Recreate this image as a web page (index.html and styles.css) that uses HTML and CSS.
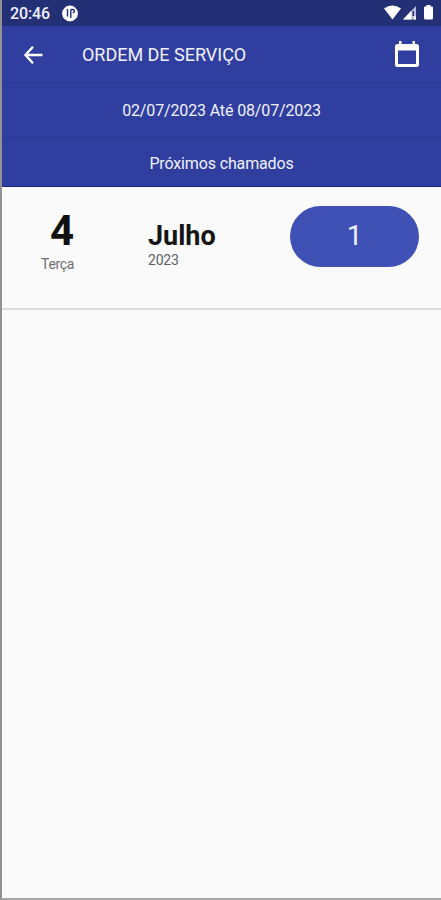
FILE: index.html
```html
<!DOCTYPE html>
<html lang="pt-BR">
<head>
<meta charset="utf-8">
<title>Ordem de Serviço</title>
<link rel="stylesheet" href="styles.css">
</head>
<body>
<div class="screen">
  <div class="status">
    <span class="clock">20:46</span>
    <svg class="notice" width="16" height="17" viewBox="0 0 16 17"><circle cx="8" cy="8.500" r="7.900" fill="#fff"/><path d="M5.500 4v7.500M8.800 13V4.500M8.800 4.500h2a1.600 1.600 0 0 1 0 3.200" fill="none" stroke="#243075" stroke-width="1.400"/></svg>
    <svg class="signals" width="50" height="16" viewBox="0 0 50 16">
      <path d="M0 3.500Q8.500-2.500 17 3.500L8.500 14.500z" fill="#fff"/>
      <path d="M19 14.500L32 1v13.500z" fill="#b5bbd9"/><path d="M19 14.500L27.500 5.600v8.900zM30 11.500h2v3h-2z" fill="#fff"/><path d="M28.500 6h1.500v5h-1.500z" fill="#243075"/>
      <path d="M42.500 0h4v1.500h1.500q1 0 1 1V13q0 1.500-1.500 1.500h-6Q40 14.500 40 13V2.500q0-1 1-1h1.500z" fill="#fff"/>
    </svg>
  </div>
  <header class="appbar">
    <svg class="back" width="20" height="20" viewBox="0 0 20 20"><path d="M19.500 10H3M10 1.700L2.500 10l7.500 8.300" fill="none" stroke="#fff" stroke-width="2.400"/></svg>
    <h1 class="title">ORDEM DE SERVIÇO</h1>
    <svg class="calendar" width="24" height="27" viewBox="0 0 24 27"><path fill="#fff" fill-rule="evenodd" d="M4 0h2.500v3h11V0H20v3h1.500Q24 3 24 5.500v18Q24 26 21.500 26h-19Q0 26 0 23.500v-18Q0 3 2.500 3H4zM3 9.500V23h18V9.500z"/></svg>
  </header>
  <div class="band range">02/07/2023 Até 08/07/2023</div>
  <div class="band upcoming">Próximos chamados</div>
  <main class="list">
    <div class="row">
      <div class="day"><div class="number">4</div><div class="weekday">Terça</div></div>
      <div class="month"><div class="name">Julho</div><div class="year">2023</div></div>
      <div class="count">1</div>
    </div>
  </main>
</div>
</body>
</html>
```
FILE: styles.css
```css
* { box-sizing: border-box; }
body { margin: 0; font-family: Roboto, "Liberation Sans", sans-serif; background: #fafafa; }
.screen {
  height: 900px;
  display: flex;
  flex-direction: column;
  border-left: 2px solid #929294;
  border-bottom: 2px solid #a4a4a4;
  background: #fafafa;
  overflow: hidden;
}
.status, .appbar, .band { margin-left: -2px; border-left: 2px solid #34405f; color: #f0f1fb; flex-shrink: 0; }
.status { height: 26px; display: flex; align-items: center; padding: 0 7px 0 8px; background: #243075; }
.clock { font-size: 16px; font-weight: 500; line-height: 28px; width: 52px; letter-spacing: -0.1px; padding-top: 1px; }
.signals { margin-left: auto; }
.appbar { height: 57px; display: flex; align-items: center; padding: 0 22px 0 21px; background: #303f9f; }
.title { margin: 0 auto 0 39px; font-size: 18px; font-weight: 400; line-height: 24px; white-space: nowrap; letter-spacing: -0.02px; }
.band { text-align: center; font-size: 16px; letter-spacing: -0.14px; background: #303f9f; border-top: 1px solid #2b3990; }
.range { height: 54px; line-height: 53px; }
.upcoming { height: 50px; line-height: 51px; border-bottom: 1px solid #17288c; }
.row { height: 123px; display: flex; align-items: flex-start; padding: 19px 22px 0 0; border-bottom: 2px solid #dcdcdc; }
.day { width: 72px; text-align: right; }
.number { font-size: 42px; font-weight: 700; line-height: 50px; color: #111; }
.weekday { font-size: 14px; letter-spacing: -0.35px; line-height: 16px; color: #707070; }
.month { margin-left: 74px; padding-top: 14px; }
.name { font-size: 27px; font-weight: 700; line-height: 32px; color: #151515; }
.year { font-size: 14px; letter-spacing: -0.2px; line-height: 16px; color: #606060; }
.count { margin-left: auto; width: 129px; height: 61px; border-radius: 31px; background: #3f51b5; color: #eef0fc; font-size: 28px; line-height: 60px; text-align: center; }
```
